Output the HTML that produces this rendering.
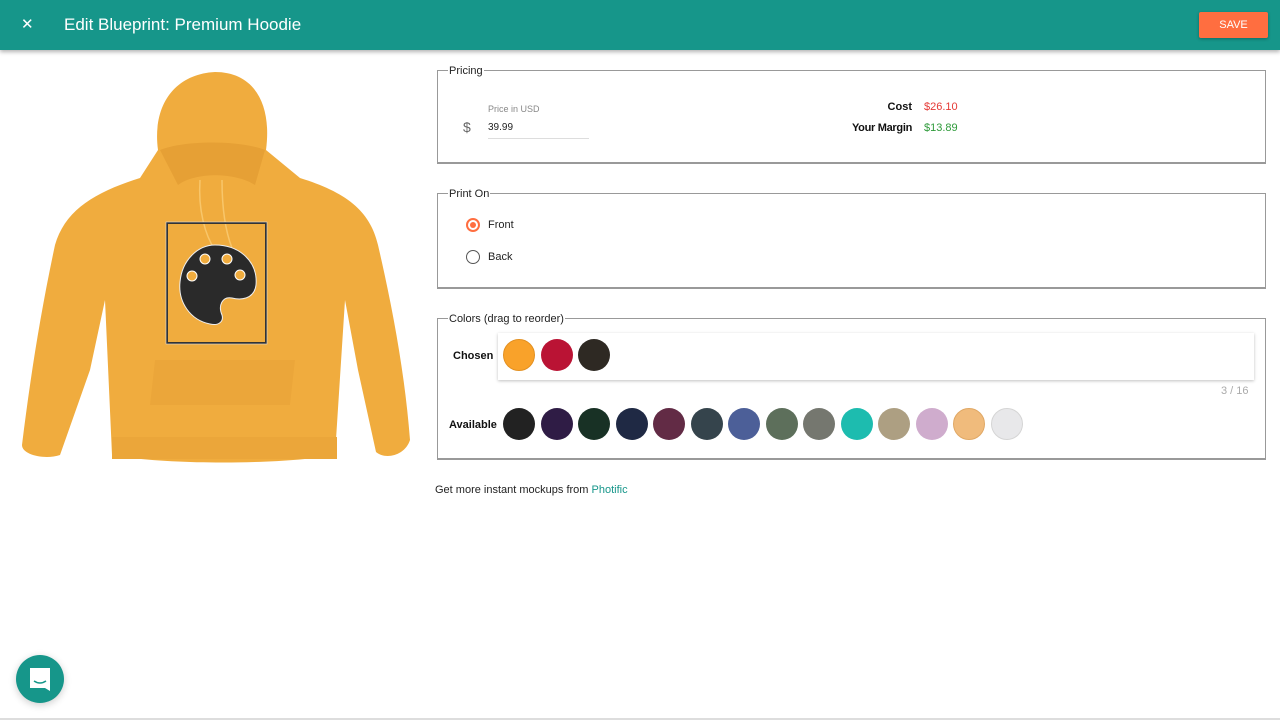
<!DOCTYPE html>
<html><head><style>
*{box-sizing:border-box;margin:0;padding:0}
body{width:1280px;height:720px;overflow:hidden;background:#fff;font-family:"Liberation Sans",sans-serif;position:relative;color:#222}
.hdr{position:absolute;left:0;top:0;width:1280px;height:50px;background:#16968a;box-shadow:0 2px 4px rgba(0,0,0,.3);color:#fff}
.hdr .x{position:absolute;left:21px;top:15px;font-size:15px}
.hdr .t{position:absolute;left:64px;top:15px;font-size:17px}
.save{position:absolute;left:1199px;top:12px;width:69px;height:26px;background:#ff6e40;color:#fff;font-size:11px;text-align:center;line-height:26px;border-radius:2px;box-shadow:0 1px 3px rgba(0,0,0,.3)}
.fs{position:absolute;left:437px;width:829px;border:1px solid #999;border-bottom-width:2px}
.lg{position:absolute;top:-6px;left:10px;background:#fff;padding:0 1px;font-size:11px;color:#222}
.abs{position:absolute;font-size:11px}
.sw{position:absolute;width:32px;height:32px;border-radius:50%}
</style></head><body>
<div class="hdr"><span class="x">✕</span><span class="t">Edit Blueprint: Premium Hoodie</span></div>
<div class="save">SAVE</div>

<svg style="position:absolute;left:0;top:55px" width="430" height="420" viewBox="0 55 430 420">
<path d="M158 150 C152 105 175 74 215 72 C255 72 272 105 266 150 L300 178 C345 192 370 210 378 245 C393 310 405 375 410 440 C405 456 385 460 376 452 L358 370 L345 300 L335 455 C280 465 165 465 112 455 L105 300 L90 370 L60 455 C45 460 22 455 22 445 C30 380 40 315 55 245 C65 210 95 192 140 178 Z" fill="#f0ac3e"/>
<path d="M160 150 C185 140 240 140 265 150 L255 185 C235 172 195 172 178 185 Z" fill="#e6a035"/>
<path d="M200 180 C198 210 205 235 215 250 M222 180 C222 205 225 230 232 248" stroke="#f8c66a" stroke-width="1.5" fill="none"/>
<path d="M155 360 L295 360 L290 405 L150 405 Z" fill="#eba63a"/>
<rect x="112" y="437" width="225" height="22" fill="#eba63a"/>
<rect x="167" y="223" width="99" height="120" fill="none" stroke="#333" stroke-width="2"/>
<rect x="166" y="222" width="101" height="122" fill="none" stroke="#ddd" stroke-width="0.6"/>
<path d="M215 245 C240 245 258 262 256 285 C254 300 240 300 232 298 C222 296 218 306 222 315 C224 322 218 326 210 324 C190 320 178 302 180 282 C182 260 198 245 215 245 Z" fill="#2a2a2a" stroke="#eee" stroke-width="1"/>
<circle cx="205" cy="259" r="5" fill="#f0ac3e" stroke="#fff"/><circle cx="227" cy="259" r="5" fill="#f0ac3e" stroke="#fff"/>
<circle cx="192" cy="276" r="5" fill="#f0ac3e" stroke="#fff"/><circle cx="240" cy="275" r="5" fill="#f0ac3e" stroke="#fff"/>
</svg>

<div class="fs" style="top:70px;height:94px"><span class="lg">Pricing</span>
<span class="abs" style="left:25px;top:48px;font-size:14px;color:#666">$</span>
<span class="abs" style="left:50px;top:33px;font-size:9px;color:#888">Price in USD</span>
<span class="abs" style="left:50px;top:51px;font-size:10px">39.99</span>
<div style="position:absolute;left:50px;top:67px;width:101px;height:1px;background:#ddd"></div>
<span class="abs" style="right:353px;top:30px;font-weight:bold;color:#111">Cost</span>
<span class="abs" style="left:486px;top:30px;color:#e53935">$26.10</span>
<span class="abs" style="right:353px;top:51px;font-weight:bold;color:#111;letter-spacing:-0.3px">Your Margin</span>
<span class="abs" style="left:486px;top:51px;color:#2e9a3a">$13.89</span>
</div>

<div class="fs" style="top:193px;height:96px"><span class="lg">Print On</span>
<div style="position:absolute;left:28px;top:24px;width:14px;height:14px;border:2px solid #ff6e40;border-radius:50%"><div style="margin:2px;width:6px;height:6px;border-radius:50%;background:#ff6e40"></div></div>
<span class="abs" style="left:50px;top:25px">Front</span>
<div style="position:absolute;left:28px;top:56px;width:14px;height:14px;border:1.5px solid #555;border-radius:50%"></div>
<span class="abs" style="left:50px;top:57px">Back</span>
</div>

<div class="fs" style="top:318px;height:142px"><span class="lg">Colors (drag to reorder)</span>
<span class="abs" style="left:15px;top:31px;font-weight:bold;color:#111">Chosen</span>
<div style="position:absolute;left:60px;top:14px;width:756px;height:47px;background:#fff;box-shadow:0 1px 3px rgba(0,0,0,.25)"></div>
<div class="sw" style="left:65px;top:20px;background:#f9a22a;border:1px solid #e39020"></div>
<div class="sw" style="left:103px;top:20px;background:#ba1334"></div>
<div class="sw" style="left:140px;top:20px;background:#2e2923"></div>
<span class="abs" style="left:783px;top:66px;color:#aaa">3 / 16</span>
<span class="abs" style="left:11px;top:100px;font-weight:bold;color:#111">Available</span>
<div class="sw" style="left:65px;top:89px;background:#222"></div>
<div class="sw" style="left:103px;top:89px;background:#2f1c45"></div>
<div class="sw" style="left:140px;top:89px;background:#183125"></div>
<div class="sw" style="left:178px;top:89px;background:#1f2944"></div>
<div class="sw" style="left:215px;top:89px;background:#622b45"></div>
<div class="sw" style="left:253px;top:89px;background:#35444c"></div>
<div class="sw" style="left:290px;top:89px;background:#4c5f98"></div>
<div class="sw" style="left:328px;top:89px;background:#5d6f5b"></div>
<div class="sw" style="left:365px;top:89px;background:#75776f"></div>
<div class="sw" style="left:403px;top:89px;background:#1dbcaf"></div>
<div class="sw" style="left:440px;top:89px;background:#ad9f82"></div>
<div class="sw" style="left:478px;top:89px;background:#cfaccd"></div>
<div class="sw" style="left:515px;top:89px;background:#f0bb7c;border:1px solid #e0a865"></div>
<div class="sw" style="left:553px;top:89px;background:#e8e8ea;border:1px solid #d5d5d5"></div>
</div>

<span class="abs" style="left:435px;top:484px;color:#222">Get more instant mockups from <span style="color:#16968a">Photific</span></span>

<div style="position:absolute;left:16px;top:655px;width:48px;height:48px;border-radius:50%;background:#16968a;box-shadow:0 2px 8px rgba(0,0,0,.2)">
<svg width="48" height="48"><path d="M14 13 H34 V36 L29 33 H14 Z" fill="#fff"/><path d="M18 26 Q24 30 30 26" stroke="#16968a" stroke-width="1.5" fill="none"/></svg></div>
<div style="position:absolute;left:0;top:718px;width:1280px;height:2px;background:#ddd"></div>
</body></html>
